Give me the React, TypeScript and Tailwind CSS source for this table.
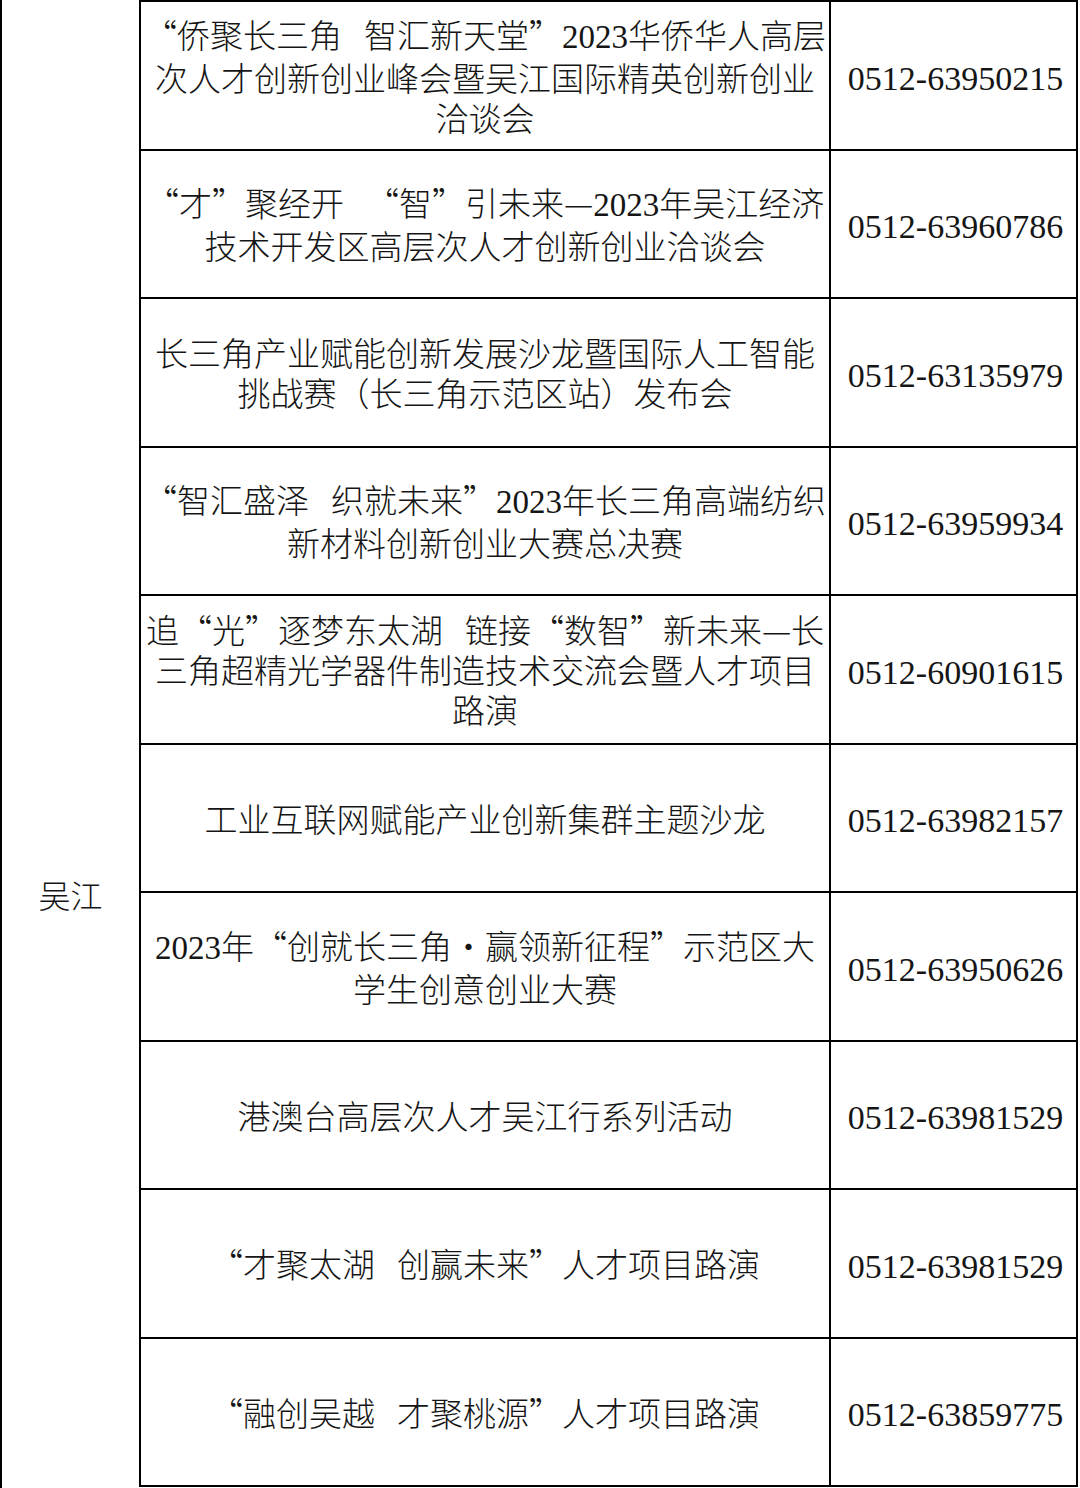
import React from "react";

const rows: { lines: string[]; phone: string }[] = [
  { lines: ["“侨聚长三角 智汇新天堂”2023华侨华人高层", "次人才创新创业峰会暨吴江国际精英创新创业", "洽谈会"], phone: "0512-63950215" },
  { lines: ["“才”聚经开 “智”引未来—2023年吴江经济", "技术开发区高层次人才创新创业洽谈会"], phone: "0512-63960786" },
  { lines: ["长三角产业赋能创新发展沙龙暨国际人工智能", "挑战赛（长三角示范区站）发布会"], phone: "0512-63135979" },
  { lines: ["“智汇盛泽 织就未来”2023年长三角高端纺织", "新材料创新创业大赛总决赛"], phone: "0512-63959934" },
  { lines: ["追“光”逐梦东太湖 链接“数智”新未来—长", "三角超精光学器件制造技术交流会暨人才项目", "路演"], phone: "0512-60901615" },
  { lines: ["工业互联网赋能产业创新集群主题沙龙"], phone: "0512-63982157" },
  { lines: ["2023年“创就长三角·赢领新征程”示范区大", "学生创意创业大赛"], phone: "0512-63950626" },
  { lines: ["港澳台高层次人才吴江行系列活动"], phone: "0512-63981529" },
  { lines: ["“才聚太湖 创赢未来”人才项目路演"], phone: "0512-63981529" },
  { lines: ["“融创吴越 才聚桃源”人才项目路演"], phone: "0512-63859775" },
];

function Line({ text }: { text: string }) {
  const parts = text.split(/([0-9]+| )/);
  return (
    <div className="whitespace-pre">
      {parts.map((p, i) => {
        if (p === "") return null;
        if (p === " ")
          return <span key={i} className="inline-block w-[22px]">{" "}</span>;
        if (/^[0-9]+$/.test(p))
          return (
            <span key={i} className="font-['Liberation_Serif',serif]">
              {p}
            </span>
          );
        return <span key={i}>{p}</span>;
      })}
    </div>
  );
}

export default function App() {
  return (
    <div className="w-[1080px] h-[1488px] bg-white flex text-[#151515] font-['Noto_Sans_CJK_SC',sans-serif] font-light">
      <div className="w-[139px] h-[1488px] border-l-2 border-black flex flex-col items-center pt-[874px]">
        <div className="text-[32px] leading-[40px]">吴江</div>
      </div>
      <div className="w-[939px] h-[1487px] border-2 border-black flex flex-col">
        {rows.map((r, i) => (
          <div
            key={i}
            className={
              "flex-1 flex " + (i > 0 ? "border-t-2 border-black" : "")
            }
          >
            <div className="w-[688px] flex flex-col items-center justify-center text-[33px] leading-[40px]">
              {r.lines.map((l, j) => (
                <Line key={j} text={l} />
              ))}
            </div>
            <div className="flex-1 border-l-2 border-black flex items-center justify-center font-['Liberation_Serif',serif] font-normal text-[34px] pl-[4px] pt-[6px]">
              {r.phone}
            </div>
          </div>
        ))}
      </div>
    </div>
  );
}
